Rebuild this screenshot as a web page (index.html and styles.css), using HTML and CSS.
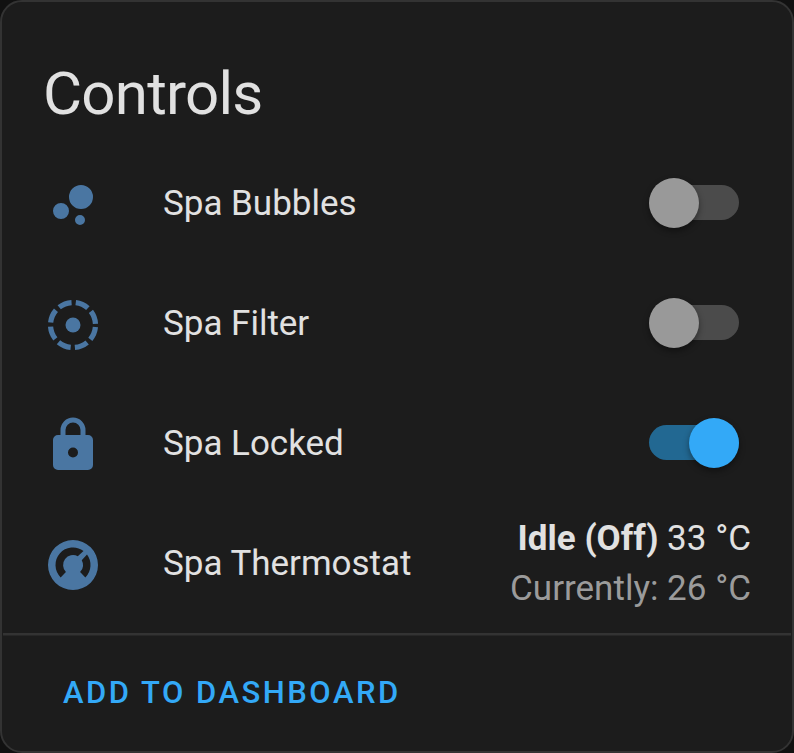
FILE: index.html
```html
<!DOCTYPE html>
<html lang="en">
<head>
<meta charset="utf-8">
<title>Controls</title>
<link rel="stylesheet" href="styles.css">
</head>
<body>
<main class="card">
  <h1 class="title">Controls</h1>
  <div class="rows">
    <div class="row">
      <svg class="icon" viewBox="0 0 24 24"><path d="M7.2 11.2a3.2 3.2 0 1 1 0 6.4 3.2 3.2 0 0 1 0-6.4m7.6 4.8a2 2 0 1 1 0 4 2 2 0 0 1 0-4m.4-12a4.8 4.8 0 1 1 0 9.6 4.8 4.8 0 0 1 0-9.6"/></svg>
      <span class="name">Spa Bubbles</span>
      <span class="switch"><span class="knob"></span></span>
    </div>
    <div class="row">
      <svg class="icon" viewBox="0 0 24 24"><circle cx="12" cy="12" r="3"/><circle class="ring" cx="12" cy="12" r="9"/></svg>
      <span class="name">Spa Filter</span>
      <span class="switch"><span class="knob"></span></span>
    </div>
    <div class="row">
      <svg class="icon" viewBox="0 0 24 24"><path d="M12 17a2 2 0 0 0 2-2 2 2 0 0 0-2-2 2 2 0 0 0-2 2 2 2 0 0 0 2 2m6-9a2 2 0 0 1 2 2v10a2 2 0 0 1-2 2H6a2 2 0 0 1-2-2V10a2 2 0 0 1 2-2h1V6a5 5 0 0 1 10 0v2h1m-6-5a3 3 0 0 0-3 3v2h6V6a3 3 0 0 0-3-3z"/></svg>
      <span class="name">Spa Locked</span>
      <span class="switch on"><span class="knob"></span></span>
    </div>
    <div class="row">
      <svg class="icon" viewBox="0 0 24 24"><path fill-rule="evenodd" d="M12 2a10 10 0 1 0 0 20 10 10 0 0 0 0-20M7.05 16.95A7 7 0 0 1 16.2 6.4l-2.3 2.1A4 4 0 0 0 9.17 14.83zM17.6 7.8a7 7 0 0 1-.65 9.15l-2.12-2.12a4 4 0 0 0 .67-4.73z"/></svg>
      <span class="name">Spa Thermostat</span>
      <div class="state"><div><b>Idle (Off)</b> 33 °C</div><div class="current">Currently: 26 °C</div></div>
    </div>
  </div>
  <footer class="actions"><span class="action">ADD TO DASHBOARD</span></footer>
</main>
</body>
</html>
```
FILE: styles.css
```css
* { box-sizing: border-box; }
body { margin: 0; background: #111; font-family: Roboto, sans-serif; color: #e1e1e1; }
.card { width: 794px; height: 753px; display: flex; flex-direction: column; background: #1c1c1c; border: 2px solid #333; border-radius: 22px; }
.title { margin: 0; padding: 32px 0 0 41px; height: 141px; font-size: 60px; line-height: 120px; font-weight: 400; letter-spacing: -0.75px; }
.rows { height: 490px; display: flex; flex-direction: column; gap: 20px; padding: 10px 41px 0; }
.row { height: 100px; display: flex; align-items: center; }
.icon { width: 60px; height: 60px; margin: 4px 60px 0 0; fill: #4a76a2; }
.ring { fill: none; stroke: #4a76a2; stroke-width: 2.1; stroke-dasharray: 5.3186 1.75; stroke-dashoffset: -0.875; }
.name { flex: 1; padding-top: 2px; font-size: 35px; line-height: 50px; letter-spacing: -0.02px; }
.switch { width: 90px; height: 35px; margin: 0 12px 1px 0; border-radius: 18px; background: #4b4b4b; display: flex; align-items: center; }
.knob { width: 50px; height: 50px; flex: none; margin-top: 1px; border-radius: 50%; background: #999; box-shadow: 0 3px 6px #0006; }
.on { background: #226892; justify-content: flex-end; }
.on .knob { background: #33a9f7; }
.state { padding-top: 2px; font-size: 35px; line-height: 50px; text-align: right; }
.current { color: #9b9b9b; }
.actions { flex: 1; margin: 0 1px; border-top: 2px solid #333; box-shadow: inset 0 1px #272727; padding: 33px 60px; }
.action { font-size: 31px; line-height: 50px; font-weight: 500; letter-spacing: 2.5px; color: #33a9f7; }
```
